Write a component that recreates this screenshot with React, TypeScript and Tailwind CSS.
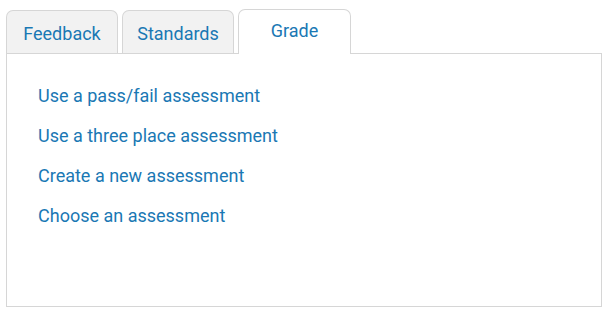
import React, { useState } from 'react';

const TABS = ['Feedback', 'Standards', 'Grade'];

const LINKS = [
    'Use a pass/fail assessment',
    'Use a three place assessment',
    'Create a new assessment',
    'Choose an assessment',
];

export default function App() {
    const [active, setActive] = useState('Grade');

    return (
        <div className="w-[614px] h-[320px] bg-white pl-[6px] pt-[8px]" style={{ fontFamily: 'Roboto, "Noto Sans", sans-serif' }}>
            <div className="w-[596px]">
                {/* Tabs */}
                <div className="flex items-end gap-[4px] h-[45px] relative z-10">
                    {TABS.map(tab => {
                        const isActive = tab === active;
                        return (
                            <button
                                key={tab}
                                type="button"
                                onClick={() => setActive(tab)}
                                className={
                                    isActive
                                        ? 'w-[113px] h-[45px] -mb-px pb-[4px] bg-white border border-b-0 border-[#d6d6d6] rounded-t-[7px] text-[18px] text-[#1a78b4]'
                                        : 'w-[112px] h-[43px] pt-[3px] bg-[#f2f2f2] border border-b-0 border-[#d6d6d6] rounded-t-[7px] text-[18px] text-[#1a78b4]'
                                }
                            >
                                {tab}
                            </button>
                        );
                    })}
                </div>

                {/* Panel */}
                <div className="h-[254px] border border-[#d6d6d6] bg-white pt-[30px] pl-[31px]">
                    <ul className="flex flex-col gap-[16px]">
                        {LINKS.map(link => (
                            <li key={link} className="h-[24px] leading-[24px]">
                                <a href="#" className="text-[18px] leading-[24px] text-[#1a78b4] hover:underline">
                                    {link}
                                </a>
                            </li>
                        ))}
                    </ul>
                </div>
            </div>
        </div>
    );
}
